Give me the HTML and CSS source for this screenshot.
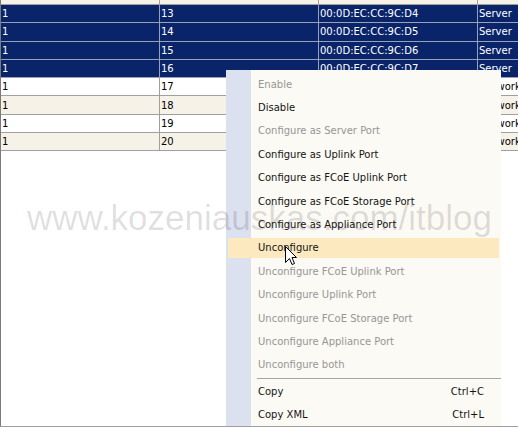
FILE: index.html
```html
<!DOCTYPE html>
<html>
<head>
<meta charset="utf-8">
<link rel="stylesheet" href="styles.css">
</head>
<body>
<div class="panel">
  <div class="grid">
    <div class="row top alt"><div class="cell"></div><div class="cell"></div><div class="cell"></div><div class="cell last"></div></div>
    <div class="row sel"><div class="cell">1</div><div class="cell">13</div><div class="cell">00:0D:EC:CC:9C:D4</div><div class="cell last">Server</div></div>
    <div class="row sel"><div class="cell">1</div><div class="cell">14</div><div class="cell">00:0D:EC:CC:9C:D5</div><div class="cell last">Server</div></div>
    <div class="row sel"><div class="cell">1</div><div class="cell">15</div><div class="cell">00:0D:EC:CC:9C:D6</div><div class="cell last">Server</div></div>
    <div class="row sel"><div class="cell">1</div><div class="cell">16</div><div class="cell">00:0D:EC:CC:9C:D7</div><div class="cell last">Server</div></div>
    <div class="row"><div class="cell">1</div><div class="cell">17</div><div class="cell">00:0D:EC:CC:9C:D8</div><div class="cell last">Network</div></div>
    <div class="row alt"><div class="cell">1</div><div class="cell">18</div><div class="cell">00:0D:EC:CC:9C:D9</div><div class="cell last">Network</div></div>
    <div class="row"><div class="cell">1</div><div class="cell">19</div><div class="cell">00:0D:EC:CC:9C:DA</div><div class="cell last">Network</div></div>
    <div class="row alt"><div class="cell">1</div><div class="cell">20</div><div class="cell">00:0D:EC:CC:9C:DB</div><div class="cell last">Network</div></div>
  </div>

  <div class="menu">
    <div class="item dis"><span>Enable</span></div>
    <div class="item"><span>Disable</span></div>
    <div class="item dis"><span>Configure as Server Port</span></div>
    <div class="item"><span>Configure as Uplink Port</span></div>
    <div class="item"><span>Configure as FCoE Uplink Port</span></div>
    <div class="item"><span>Configure as FCoE Storage Port</span></div>
    <div class="item"><span>Configure as Appliance Port</span></div>
    <div class="item hl"><span>Unconfigure</span></div>
    <div class="item dis"><span>Unconfigure FCoE Uplink Port</span></div>
    <div class="item dis"><span>Unconfigure Uplink Port</span></div>
    <div class="item dis"><span>Unconfigure FCoE Storage Port</span></div>
    <div class="item dis"><span>Unconfigure Appliance Port</span></div>
    <div class="item dis"><span>Unconfigure both</span></div>
    <div class="sep"></div>
    <div class="item"><span>Copy</span><span class="key">Ctrl+C</span></div>
    <div class="item"><span>Copy XML</span><span class="key">Ctrl+L</span></div>
  </div>

  <div class="watermark">www.kozeniauskas.com/itblog</div>

  <svg class="cursor" width="12" height="19" viewBox="0 0 12 19">
    <path d="M0.5 0.5 L0.5 16.5 L4.5 12.5 L7 18.5 L9.5 17.5 L7 11.5 L11.5 11.5 Z" fill="#fff" stroke="#000" stroke-width="1" stroke-linejoin="miter"/>
  </svg>
</div>
</body>
</html>
```

FILE: styles.css
```css
html, body {
  margin: 0;
  padding: 0;
  background: #ffffff;
}

.panel {
  position: relative;
  width: 518px;
  height: 427px;
  box-sizing: border-box;
  border-left: 1px solid #7a7a7a;
  border-bottom: 1px solid #a0a0a0;
  overflow: hidden;
  background: #ffffff;
  font-family: "DejaVu Sans", Verdana, sans-serif;
  font-size: 10px;
  color: #000;
}

.grid {
  display: flex;
  flex-direction: column;
}

.row {
  display: flex;
  height: 18.3px;
  box-sizing: border-box;
  border-bottom: 1px solid #a0a0a0;
  background: #ffffff;
}

.row.top {
  height: 5px;
}

.row.alt {
  background: #f6f2e8;
}

.row.sel {
  background: #0a246a;
  color: #ffffff;
  border-bottom-color: #9aa0b8;
}

.cell {
  width: 159px;
  flex: none;
  box-sizing: border-box;
  border-right: 1px solid #a0a0a0;
  padding-left: 1px;
  display: flex;
  align-items: center;
  white-space: nowrap;
  overflow: hidden;
}

.row.sel .cell {
  border-right-color: #9aa0b8;
}

.cell.last {
  flex: 1;
  border-right: none;
}

.menu {
  position: absolute;
  left: 225px;
  top: 70px;
  width: 275px;
  height: 360px;
  padding-top: 2px;
  box-sizing: border-box;
  background: linear-gradient(to right, #dce1ef 0, #dce1ef 25px, #fcfaf4 25px);
}

.item {
  height: 23.4px;
  box-sizing: border-box;
  display: flex;
  align-items: center;
  justify-content: space-between;
  padding-left: 30px;
  padding-right: 15px;
  border-top: 2px solid transparent;
  border-bottom: 1px solid transparent;
  border-left: 2px solid transparent;
  border-right: 2px solid transparent;
  background-clip: padding-box;
  color: #141414;
  white-space: nowrap;
}

.item.dis {
  color: #969696;
}

.item.hl {
  background-color: #fde9c0;
}

.sep {
  height: 3px;
  box-sizing: border-box;
  margin-left: 31px;
  border-bottom: 1px solid #a6a6a6;
  margin-bottom: 0;
}

.watermark {
  position: absolute;
  left: 26px;
  top: 200px;
  font-family: "Liberation Sans", Arial, sans-serif;
  font-size: 35px;
  line-height: 35px;
  color: rgba(0, 0, 0, 0.13);
  white-space: nowrap;
  pointer-events: none;
}

.cursor {
  position: absolute;
  left: 284px;
  top: 246px;
}
```
